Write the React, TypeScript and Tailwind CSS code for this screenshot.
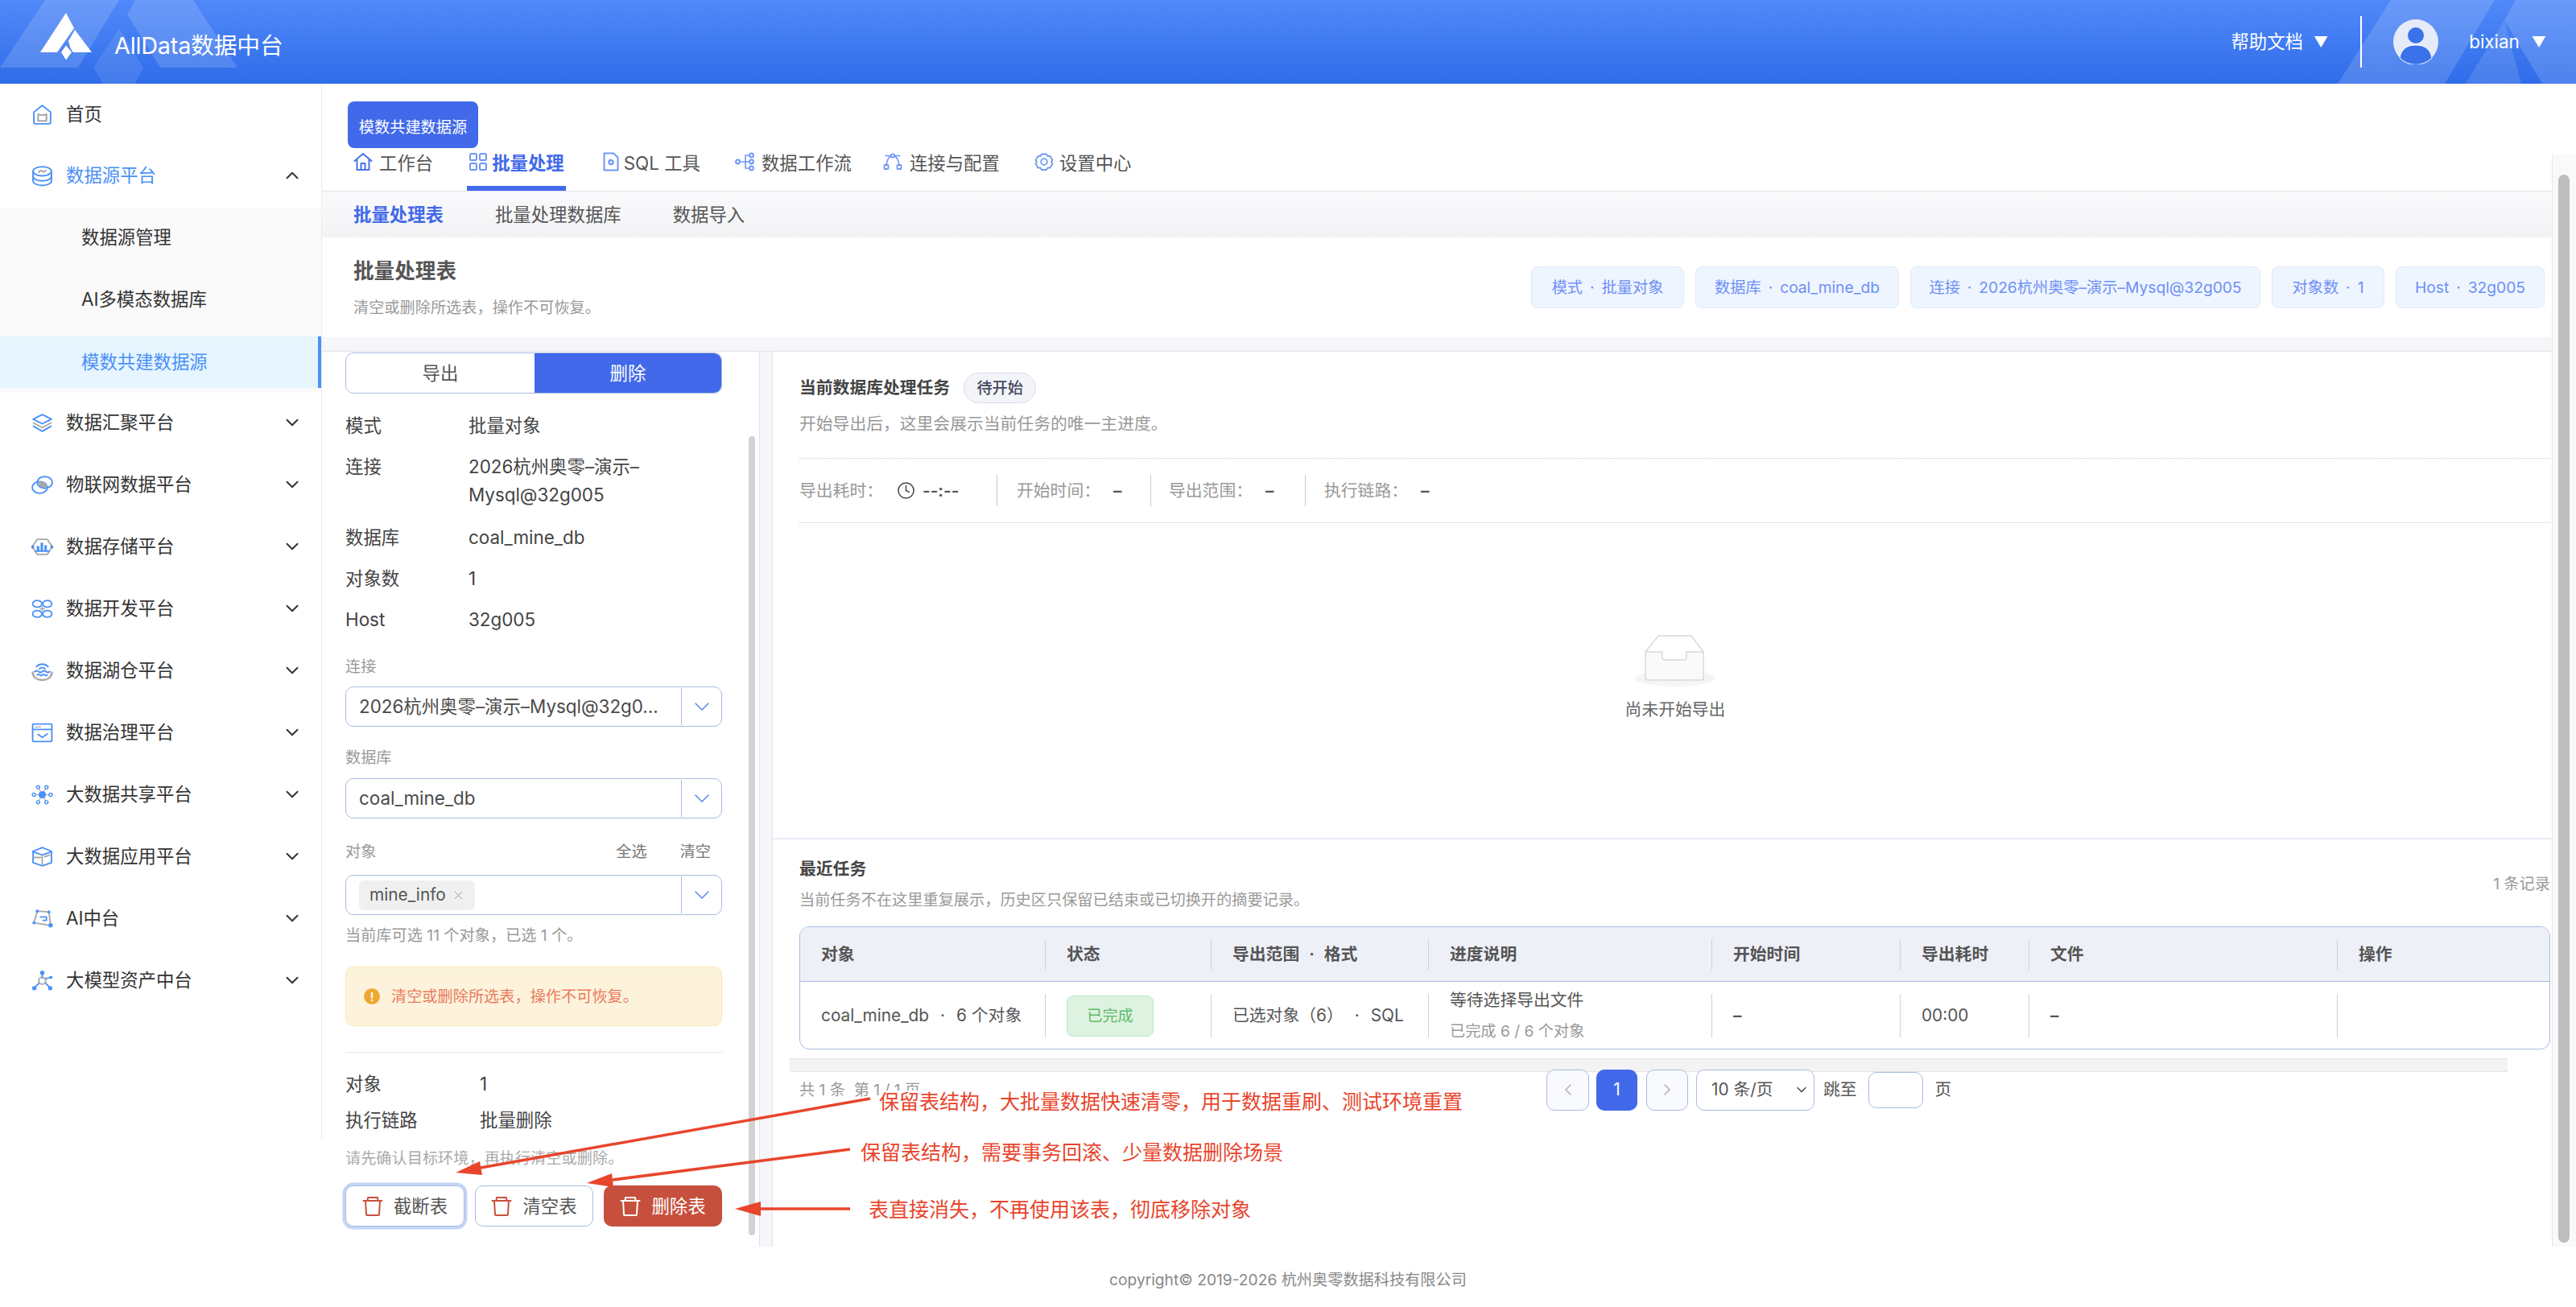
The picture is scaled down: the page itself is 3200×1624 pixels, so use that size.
import React from "react";
import { ChevronDown, ChevronUp, ChevronLeft, ChevronRight, Clock, X } from "lucide-react";

const B = "#4a90f7";
const G = "#a8a8a8";
const C = "\uFF0C";
const CL = "\uFF1A";
const LP = "\uFF08";
const RP = "\uFF09";

function Ico({ children }: { children: React.ReactNode }) {
  return (
    <svg viewBox="0 0 26 26" width="27" height="27" fill="none" stroke={B} strokeWidth="1.8" strokeLinecap="round" strokeLinejoin="round" className="shrink-0">
      {children}
    </svg>
  );
}

const sideIcons: Record<string, React.ReactNode> = {
  home: (
    <>
      <path d="M3 10 L13 2 L23 10 V22 a2 2 0 0 1-2 2 H5 a2 2 0 0 1-2-2 Z" />
      <path d="M8 12.5 q5 2 10 0 V20.5 H8 Z" stroke={G} strokeWidth="2" />
    </>
  ),
  db: (
    <>
      <ellipse cx="13" cy="7.5" rx="11" ry="5.5" />
      <path d="M9 8.5 q2 -3 4 -1 t4 -1" stroke={G} strokeWidth="2" />
      <path d="M2 7.5 V19 c0 3 5 5.5 11 5.5 s11 -2.5 11 -5.5 V7.5" />
      <path d="M2 13.5 c0 3 5 5.5 11 5.5 s11 -2.5 11 -5.5" />
    </>
  ),
  layers: (
    <>
      <path d="M13 3 L24 8.5 L13 14 L2 8.5 Z" />
      <path d="M2.5 13 L13 18.5 L23.5 13" stroke={G} />
      <path d="M2.5 17 L13 23 L23.5 17" />
    </>
  ),
  iot: (
    <>
      <ellipse cx="16" cy="10" rx="9" ry="7" />
      <ellipse cx="10" cy="16" rx="9" ry="7" />
      <ellipse cx="13.5" cy="12.5" rx="5.5" ry="3.2" fill={G} stroke="none" transform="rotate(30 13.5 12.5)" />
    </>
  ),
  store: (
    <>
      <path d="M7 4 H19 L25 13 L19 22 H7 L1 13 Z" stroke={G} />
      <path d="M8 12 v6 M12.5 8 v10 M17 11 v7" strokeWidth="3" strokeLinecap="butt" />
      <path d="M5 18 H21" />
      <circle cx="1.5" cy="13" r="1" fill={B} />
      <circle cx="24.5" cy="13" r="1" fill={B} />
    </>
  ),
  dev: (
    <>
      <ellipse cx="7" cy="7" rx="5.5" ry="4" />
      <ellipse cx="19" cy="7" rx="5.5" ry="4" />
      <ellipse cx="7" cy="19" rx="5.5" ry="4" />
      <ellipse cx="19" cy="19" rx="5.5" ry="4" />
      <path d="M13 9 L14 12 L17 13 L14 14 L13 17 L12 14 L9 13 L12 12 Z" fill={G} stroke="none" />
    </>
  ),
  lake: (
    <>
      <path d="M6 8 a9 8 0 0 1 14 0 M9.5 10.5 a5 4 0 0 1 7 0" />
      <path d="M4 14 q2.2 -2 4.5 0 t4.5 0 t4.5 0 t4.5 0" />
      <path d="M7 18 q1.5 -1.5 3 0 t3 0 t3 0 t3 0" />
      <path d="M1.5 15 C2 21 7 24 13 24 s11 -3 11.5 -9" stroke={G} strokeWidth="2.4" />
    </>
  ),
  gov: (
    <>
      <rect x="1.5" y="2.5" width="23" height="21" rx="1" />
      <path d="M1.5 9 H24.5" />
      <path d="M5 6 h6" stroke={G} strokeDasharray="1.4 1.4" strokeWidth="1.4" />
      <path d="M8 15 l5 3.5 l6 -4" />
    </>
  ),
  share: (
    <>
      <path d="M13 13 L3 13 M13 13 L23 13 M13 13 L8 4 M13 13 L18 4 M13 13 L8 22 M13 13 L18 22" stroke={G} strokeWidth="1" />
      <circle cx="13" cy="13" r="4.4" fill={B} stroke="none" />
      <circle cx="3" cy="13" r="1.9" fill="#fff" strokeWidth="1.4" />
      <circle cx="23" cy="13" r="1.9" fill="#fff" strokeWidth="1.4" />
      <circle cx="8" cy="4" r="1.9" fill="#fff" strokeWidth="1.4" />
      <circle cx="18" cy="4" r="1.9" fill="#fff" strokeWidth="1.4" />
      <circle cx="8" cy="22" r="1.9" fill="#fff" strokeWidth="1.4" />
      <circle cx="18" cy="22" r="1.9" fill="#fff" strokeWidth="1.4" />
    </>
  ),
  app: (
    <>
      <path d="M13 2 L24 6.5 V20 L13 24 L2 20 V6.5 Z" />
      <path d="M2 7 L13 11 L24 7" />
      <path d="M13 11 V24 M3 14 H11 M16 13 L22 11" stroke={G} />
    </>
  ),
  ai: (
    <>
      <path d="M7 4 L21 5 L23 21 L3 18 Z" stroke={G} />
      <path d="M11 11 H18 V15 H14" />
      <circle cx="7" cy="4" r="1.8" fill={B} stroke="none" />
      <circle cx="21" cy="5" r="1.8" fill={B} stroke="none" />
      <circle cx="23" cy="21" r="2.6" fill={B} stroke="none" />
      <circle cx="3" cy="18" r="1.8" fill={B} stroke="none" />
    </>
  ),
  model: (
    <>
      <path d="M13 6 V10 M9.5 15.5 L4 21 M16.5 15.5 L22 21 M16 11 L23 9" />
      <circle cx="13" cy="13" r="4.2" stroke={G} />
      <circle cx="13" cy="3.5" r="2.6" fill={B} stroke="none" />
      <circle cx="3.5" cy="22" r="2.6" fill={B} stroke="none" />
      <circle cx="22.5" cy="22" r="2.6" fill={B} stroke="none" />
      <circle cx="23.5" cy="9" r="1.8" fill={B} stroke="none" />
    </>
  ),
};

const menus = [
  ["layers", "数据汇聚平台"],
  ["iot", "物联网数据平台"],
  ["store", "数据存储平台"],
  ["dev", "数据开发平台"],
  ["lake", "数据湖仓平台"],
  ["gov", "数据治理平台"],
  ["share", "大数据共享平台"],
  ["app", "大数据应用平台"],
  ["ai", "AI中台"],
  ["model", "大模型资产中台"],
];

function TabIcon({ kind, active }: { kind: string; active?: boolean }) {
  const c = active ? "#6f97f5" : kind === "home" ? "#4a74ee" : "#6f97f5";
  return (
    <svg viewBox="0 0 24 24" width="24" height="24" fill="none" stroke={c} strokeWidth="2" strokeLinecap="round" strokeLinejoin="round" className="shrink-0">
      {kind === "home" && <path d="M1.5 11 L12 2 L22.5 11 M4.5 9 V22 H19.5 V9 M9.5 22 V14 H14.5 V22" />}
      {kind === "grid" && (
        <>
          <rect x="2" y="2" width="8" height="8" rx="1.5" />
          <rect x="14" y="2" width="8" height="8" rx="1.5" />
          <rect x="2" y="14" width="8" height="8" rx="1.5" />
          <rect x="14" y="14" width="8" height="8" rx="1.5" />
        </>
      )}
      {kind === "file" && (
        <>
          <path d="M3.5 1.5 H15 L20.5 6.5 V22.5 H3.5 Z" />
          <circle cx="12" cy="12.5" r="2.6" strokeWidth="2.4" strokeDasharray="2 0.8" />
        </>
      )}
      {kind === "flow" && (
        <>
          <circle cx="3.5" cy="12" r="2.4" />
          <circle cx="20.5" cy="4" r="2.4" />
          <circle cx="20.5" cy="12" r="2.4" />
          <circle cx="20.5" cy="20" r="2.4" />
          <path d="M6 12 H18 M13 4 H18 M13 20 H18 M13 4 V20" strokeWidth="1.6" />
        </>
      )}
      {kind === "link" && (
        <>
          <rect x="1.5" y="16" width="5" height="5" rx="0.8" strokeWidth="1.8" />
          <rect x="17.5" y="16" width="5" height="5" rx="0.8" strokeWidth="1.8" />
          <circle cx="12" cy="4.5" r="2.2" strokeWidth="1.8" />
          <path d="M4 16 C5 10 7 6 10 4.5 M14 4.5 C17 6 19 10 20 16 M10 4.5 H3 M14 4.5 H21" strokeWidth="1.6" />
        </>
      )}
      {kind === "gear" && (
        <>
          <path d="M9 2.5 H15 L16.5 5 L19.5 5 L22.5 10 L21 12 L22.5 14.5 L19.5 19.5 L16.5 19.5 L15 22 H9 L7.5 19.5 L4.5 19.5 L1.5 14.5 L3 12 L1.5 10 L4.5 5 L7.5 5 Z" strokeWidth="1.8" />
          <circle cx="12" cy="12" r="3.8" strokeWidth="1.8" />
        </>
      )}
    </svg>
  );
}

function Trash({ color }: { color: string }) {
  return (
    <svg viewBox="0 0 26 26" width="26" height="26" fill="none" stroke={color} strokeWidth="2" strokeLinecap="round" strokeLinejoin="round" className="shrink-0">
      <path d="M1.5 6 H24.5" />
      <path d="M6.5 6 L7 2 H19 L19.5 6" />
      <path d="M4 6 L5 23 a1 1 0 0 0 1 1 H20 a1 1 0 0 0 1-1 L22 6" />
    </svg>
  );
}

function Select({ children }: { children: React.ReactNode }) {
  return (
    <div className="flex h-[50px] w-[468px] items-stretch rounded-[10px] border-[1.5px] border-[#a9bbdf] bg-white">
      <div className="flex min-w-0 flex-1 items-center pl-[16px] text-[22.4px] text-[#4a4a4a]">{children}</div>
      <div className="my-[1px] flex w-[50px] items-center justify-center border-l-[1.5px] border-[#a9bbdf]">
        <ChevronDown size={32} strokeWidth={1.1} color="#5b84ea" />
      </div>
    </div>
  );
}

function Kv({ k, children, w = "w-[153px]" }: { k: string; children: React.ReactNode; w?: string }) {
  return (
    <div className="flex text-[22.4px] leading-[35px] text-[#444]">
      <div className={w}>{k}</div>
      <div>{children}</div>
    </div>
  );
}

function Stat({ label, value, cls }: { label: string; value: string; cls: string }) {
  return (
    <div className={cls}>
      <span className="text-[#999]">{label}{CL}</span>
      <span className="ml-[16px] font-semibold text-[#555]">{value}</span>
    </div>
  );
}

function TagDot() {
  return <span className="mx-[9px]">·</span>;
}

const GRID = "grid grid-cols-[305px_206px_270px_352px_234px_160px_383px_1fr] items-center";
const TAG = "flex h-[52px] items-center justify-center rounded-[8px] border border-[#dde9fb] bg-[#eef5ff]";
const TH = "flex h-[38px] items-center border-r-[1.5px] border-[#cfcfd6] pl-[26px]";
const TD = "flex h-[54px] items-center whitespace-nowrap border-r-[1.5px] border-[#cfcfd6] pl-[26px]";
const NOTE = "absolute bg-white text-[25px] leading-[28px] text-[#e8452c]";

export default function App() {
  return (
    <div className="relative flex h-[1624px] w-[3200px] flex-col overflow-hidden bg-white font-[family-name:Inter,'Noto_Sans_CJK_SC',sans-serif]">
      {/* header */}
      <header className="relative flex h-[104px] shrink-0 items-center bg-gradient-to-b from-[#5089f9] to-[#2f6ce9] text-white">
        <svg className="absolute inset-0" width="3200" height="104" viewBox="0 0 3200 104">
          <g fill="#fff" fillOpacity="0.15">
            <polygon points="56,0 148,0 97,84 0,84" />
            <polygon points="168,0 240,0 295,84 199,84 158,18" />
            <polygon points="148,35 178,84 168,104 128,104 116,84" fillOpacity="0.1" />
            <polygon points="2970,0 3099,0 3037,104 2904,104" />
            <polygon points="3125,0 3200,0 3200,104 3158,104 3111,25" />
            <polygon points="3111,25 3132,104 3063,104" fillOpacity="0.12" />
          </g>
        </svg>
        <div className="relative ml-[50px] flex items-center">
          <svg width="64" height="60" viewBox="0 0 64 60" className="mb-[12px]">
            <polygon fill="#fff" points="32,0 42,19 21,49 0,49" />
            <polygon fill="#fff" points="43,21 64,49 39,49 35,35" />
            <polygon fill="#fff" points="32,39 40,49 32,60 25,49" stroke="#4a82f2" strokeWidth="1.5" />
          </svg>
          <span className="ml-[28px] mt-[10px] text-[28.8px] leading-[40px] tracking-[-0.2px]">AllData数据中台</span>
        </div>
        <div className="relative ml-auto flex items-center text-[22.4px]">
          <span>帮助文档</span>
          <span className="ml-[13px] text-[18px]">▼</span>
          <div className="ml-[40px] h-[64px] w-[2px] bg-white" />
          <svg width="56" height="56" viewBox="0 0 56 56" className="ml-[39px]">
            <circle cx="28" cy="28" r="28" fill="#e6ebf8" />
            <circle cx="28" cy="20" r="10" fill="#3a72ea" />
            <path d="M8 48 C10 36 18 32 28 32 S46 36 48 48 A28 28 0 0 1 8 48 Z" fill="#3a72ea" stroke="#fff" strokeWidth="1" />
          </svg>
          <span className="ml-[38px]">bixian</span>
          <span className="ml-[15px] mr-[37px] text-[18px]">▼</span>
        </div>
      </header>

      <div className="flex h-[1445px] shrink-0">
        {/* sidebar */}
        <aside className="h-[1312px] w-[400px] shrink-0 self-start border-r-[1.5px] border-[#ececf0] pt-[6px] text-[22.4px] text-[#333]">
          <div className="flex h-[64px] items-center pl-[39px]">
            <Ico>{sideIcons.home}</Ico>
            <span className="ml-[16px]">首页</span>
          </div>
          <div className="mt-[12px] flex h-[64px] items-center pl-[39px] pr-[23px] text-[#4a90f7]">
            <Ico>{sideIcons.db}</Ico>
            <span className="ml-[16px]">数据源平台</span>
            <ChevronUp size={26} strokeWidth={1.8} color="#333" className="ml-auto" />
          </div>
          <div className="mt-[8px] h-[230px] bg-[#fafafa] pt-[5px]">
            <div className="flex h-[64px] items-center pl-[101px]">数据源管理</div>
            <div className="mt-[13px] flex h-[64px] items-center pl-[101px]">AI多模态数据库</div>
            <div className="mt-[14px] flex h-[64px] items-center border-r-[4px] border-[#4a90f7] bg-[#e6f5fe] pl-[101px] text-[#4a90f7]">模数共建数据源</div>
          </div>
          <div className="mt-[5px] flex flex-col gap-[13px]">
            {menus.map(([ic, t]) => (
              <div key={t} className="flex h-[64px] items-center pl-[39px] pr-[23px]">
                <Ico>{sideIcons[ic]}</Ico>
                <span className="ml-[16px]">{t}</span>
                <ChevronDown size={26} strokeWidth={1.8} color="#333" className="ml-auto" />
              </div>
            ))}
          </div>
        </aside>

        {/* main */}
        <main className="flex min-w-0 flex-1">
          <div className="flex w-[2770px] shrink-0 flex-col">
            <div className="pl-[32px] pt-[22px]">
              <div className="flex h-[58px] w-[162px] items-center justify-center rounded-[8px] bg-[#4169e9] pt-[6px] text-[19.2px] text-white">模数共建数据源</div>
            </div>
            <nav className="flex h-[54px] border-b-[1.5px] border-[#e3e3ee] pl-[39px] text-[22.4px] text-[#555]">
              <div className="flex h-[53px] items-start gap-[8px] pt-[5px] leading-[28px]"><TabIcon kind="home" />工作台</div>
              <div className="ml-[42px] flex h-[53px] items-start gap-[5px] border-b-[6px] border-[#4169e9] px-[2px] pt-[5px] font-semibold leading-[28px] text-[#4169e9]"><TabIcon kind="grid" active />批量处理</div>
              <div className="ml-[44px] flex h-[53px] items-start gap-[4px] pt-[5px] leading-[28px]"><TabIcon kind="file" />SQL 工具</div>
              <div className="ml-[43px] flex h-[53px] items-start gap-[9px] pt-[5px] leading-[28px]"><TabIcon kind="flow" />数据工作流</div>
              <div className="ml-[39px] flex h-[53px] items-start gap-[9px] pt-[5px] leading-[28px]"><TabIcon kind="link" />连接与配置</div>
              <div className="ml-[43px] flex h-[53px] items-start gap-[7px] pt-[5px] leading-[28px]"><TabIcon kind="gear" />设置中心</div>
            </nav>
            <div className="flex h-[57px] items-center gap-[64px] bg-gradient-to-b from-[#fafafc] to-[#f2f3f5] pl-[39px] text-[22.4px] text-[#555]">
              <span className="font-semibold text-[#4169e9]">批量处理表</span>
              <span>批量处理数据库</span>
              <span>数据导入</span>
            </div>
            <div className="flex h-[124px] items-center justify-between pl-[39px] pr-[9px]">
              <div>
                <div className="text-[25.6px] font-semibold leading-[36px] text-[#555]">批量处理表</div>
                <div className="mt-[13px] text-[19.2px] leading-[28px] text-[#999]">{`清空或删除所选表${C}操作不可恢复。`}</div>
              </div>
              <div className="flex gap-[14px] text-[19.2px] text-[#6f8ff5]">
                <div className={`${TAG} w-[190px]`}>模式<TagDot />批量对象</div>
                <div className={`${TAG} w-[253px]`}>数据库<TagDot />coal_mine_db</div>
                <div className={`${TAG} w-[435px]`}>连接<TagDot />2026杭州奥零–演示–Mysql@32g005</div>
                <div className={`${TAG} w-[140px]`}>对象数<TagDot />1</div>
                <div className={`${TAG} w-[185px]`}>Host<TagDot />32g005</div>
              </div>
            </div>
            <div className="flex h-[130px] flex-1 flex-col bg-[#f4f6fa] pt-[17px]">
              <div className="flex flex-1 border-t-[1.5px] border-[#e3e3e8]">
                {/* left panel */}
                <section className="relative w-[544px] shrink-0 border-r-[1.5px] border-[#e3e3e8] bg-white pl-[29px] pt-[1px]">
                  <div className="flex h-[51px] w-[468px] overflow-hidden rounded-[10px] border-[1.5px] border-[#a9bbdf] text-[22.4px]">
                    <div className="flex w-[234px] items-center justify-center text-[#555]">导出</div>
                    <div className="flex flex-1 items-center justify-center bg-[#4169e9] text-white">删除</div>
                  </div>
                  <div className="mt-[22px] flex flex-col gap-[16px]">
                    <Kv k="模式">批量对象</Kv>
                    <div className="pb-[2px]">
                      <Kv k="连接">2026杭州奥零–演示–<br />Mysql@32g005</Kv>
                    </div>
                    <Kv k="数据库">coal_mine_db</Kv>
                    <Kv k="对象数">1</Kv>
                    <Kv k="Host">32g005</Kv>
                  </div>
                  <div className="mb-[10px] mt-[26px] text-[19.2px] leading-[30px] text-[#999]">连接</div>
                  <Select><span className="truncate">2026杭州奥零–演示–Mysql@32g0...</span></Select>
                  <div className="mb-[11px] mt-[23px] text-[19.2px] leading-[30px] text-[#999]">数据库</div>
                  <Select>coal_mine_db</Select>
                  <div className="mb-[14px] mt-[26px] flex w-[468px] text-[19.2px] leading-[30px] text-[#999]">
                    <span>对象</span>
                    <span className="ml-auto text-[#777]">全选</span>
                    <span className="ml-[41px] mr-[14px] text-[#777]">清空</span>
                  </div>
                  <Select>
                    <span className="flex h-[37px] w-[144px] items-center rounded-[6px] bg-[#f0f0f0] pl-[13px] text-[20.8px] text-[#555]">
                      mine_info
                      <X size={17} strokeWidth={1.4} color="#999" className="ml-[7px]" />
                    </span>
                  </Select>
                  <div className="mt-[11px] text-[19.2px] leading-[28px] text-[#999]">{`当前库可选 11 个对象${C}已选 1 个。`}</div>
                  <div className="mt-[25px] flex h-[74px] w-[468px] items-center rounded-[10px] border-[1.5px] border-[#fbe7b6] bg-[#fdf3dc] pl-[22px] text-[19.2px] text-[#ea7a5c]">
                    <span className="flex h-[20px] w-[20px] items-center justify-center rounded-full bg-[#efa82f] text-[14px] font-bold text-white">!</span>
                    <span className="ml-[14px]">{`清空或删除所选表${C}操作不可恢复。`}</span>
                  </div>
                  <div className="mt-[32px] w-[468px] border-t-[1.5px] border-[#e8e8ec]" />
                  <div className="mt-[21px] flex flex-col gap-[10px]">
                    <Kv k="对象" w="w-[167px]">1</Kv>
                    <Kv k="执行链路" w="w-[167px]">批量删除</Kv>
                  </div>
                  <div className="mt-[16px] text-[19.2px] leading-[28px] text-[#aaa]">{`请先确认目标环境${C}再执行清空或删除。`}</div>
                  <div className="mt-[20px] flex w-[468px] gap-[13px] text-[22.4px]">
                    <div className="flex h-[51px] w-[148px] items-center justify-center gap-[13px] rounded-[10px] border-[1.5px] border-[#a9bbdf] text-[#555] shadow-[0_0_0_3.5px_#c4d4f6]"><Trash color="#c9503d" />截断表</div>
                    <div className="flex h-[51px] w-[147px] items-center justify-center gap-[13px] rounded-[10px] border-[1.5px] border-[#a9bbdf] text-[#555]"><Trash color="#c9503d" />清空表</div>
                    <div className="flex h-[51px] w-[147px] items-center justify-center gap-[13px] rounded-[10px] bg-[#c6503d] text-white"><Trash color="#fff" />删除表</div>
                  </div>
                  <div className="absolute left-[530px] top-[105px] h-[993px] w-[8px] rounded-full bg-[#d2d2d2]" />
                </section>

                <div className="w-[15px] shrink-0" />

                {/* right panel */}
                <section className="flex min-w-0 flex-1 flex-col border-l-[1.5px] border-[#e3e3e8] bg-white">
                  <div className="pl-[33px] pr-[2px] pt-[26px]">
                    <div className="flex h-[38px] items-center">
                      <span className="text-[20.8px] font-semibold text-[#444]">当前数据库处理任务</span>
                      <span className="ml-[17px] flex h-[38px] w-[90px] items-center justify-center rounded-full border-[1.5px] border-[#d9dde5] bg-[#f2f4f7] text-[19.2px] font-medium text-[#444a5e]">待开始</span>
                    </div>
                    <div className="mt-[12px] text-[20.8px] leading-[28px] text-[#999]">{`开始导出后${C}这里会展示当前任务的唯一主进度。`}</div>
                    <div className="mt-[28px] flex h-[81px] items-center border-y-[1.5px] border-dotted border-[#c8c8c8] text-[20.8px]">
                      <div className="flex h-[39px] w-[246px] items-center border-r-[1.5px] border-[#c8c8c8]">
                        <span className="text-[#999]">导出耗时{CL}</span>
                        <Clock size={23} strokeWidth={1.6} color="#444" className="ml-[17px]" />
                        <span className="ml-[9px] font-semibold text-[#555]">--:--</span>
                      </div>
                      <Stat label="开始时间" value="–" cls="flex h-[39px] w-[191px] items-center border-r-[1.5px] border-[#c8c8c8] pl-[24px]" />
                      <Stat label="导出范围" value="–" cls="flex h-[39px] w-[192px] items-center border-r-[1.5px] border-[#c8c8c8] pl-[22px]" />
                      <Stat label="执行链路" value="–" cls="flex h-[39px] items-center pl-[23px]" />
                    </div>
                  </div>
                  <div className="flex h-[391px] flex-col items-center justify-center pb-[6px] pl-[32px]">
                    <svg width="100" height="64" viewBox="0 0 100 64">
                      <ellipse cx="50" cy="54" rx="50" ry="10" fill="#f5f5f5" />
                      <path d="M13 21 L29 1 H70 L85 21" fill="#fff" stroke="#d9d9d9" strokeWidth="1.5" />
                      <path d="M13 21 H34 V28 a3 3 0 0 0 3 3 H61 a3 3 0 0 0 3-3 V21 H85 V53 a3 3 0 0 1-3 3 H16 a3 3 0 0 1-3-3 Z" fill="#fafafa" stroke="#d9d9d9" strokeWidth="1.5" />
                    </svg>
                    <div className="mt-[15px] text-[20.8px] leading-[28px] text-[#666]">尚未开始导出</div>
                  </div>
                  <div className="border-t-[2px] border-[#e6ebf2] pl-[33px] pr-[2px] pt-[22px]">
                    <div className="flex items-center justify-between">
                      <div>
                        <div className="text-[20.8px] font-semibold leading-[30px] text-[#444]">最近任务</div>
                        <div className="mt-[9px] text-[19.2px] leading-[28px] text-[#999]">{`当前任务不在这里重复展示${C}历史区只保留已结束或已切换开的摘要记录。`}</div>
                      </div>
                      <span className="text-[19.2px] text-[#999]">1 条记录</span>
                    </div>
                    <div className="mt-[19px] h-[153px] overflow-hidden rounded-[12px] border-[1.5px] border-[#a9bbdf] text-[20.8px] text-[#555]">
                      <div className={`${GRID} h-[68px] border-b-[1.5px] border-[#a9bbdf] bg-[#eef0f8] font-semibold`}>
                        <div className={TH}>对象</div>
                        <div className={TH}>状态</div>
                        <div className={TH}>导出范围<span className="mx-[12px]">·</span>格式</div>
                        <div className={TH}>进度说明</div>
                        <div className={TH}>开始时间</div>
                        <div className={TH}>导出耗时</div>
                        <div className={TH}>文件</div>
                        <div className="flex h-[38px] items-center pl-[26px]">操作</div>
                      </div>
                      <div className={`${GRID} h-[84px]`}>
                        <div className={TD}>coal_mine_db<span className="mx-[14px]">·</span>6 个对象</div>
                        <div className={TD}>
                          <span className="flex h-[51px] w-[108px] items-center justify-center rounded-[8px] border-[1.5px] border-[#bfe9c6] bg-[#def2e1] text-[19.2px] text-[#5dbb6a]">已完成</span>
                        </div>
                        <div className={TD}>{`已选对象${LP}6${RP}`}<span className="mx-[14px]">·</span>SQL</div>
                        <div className="flex h-[54px] flex-col justify-center gap-[10px] border-r-[1.5px] border-[#cfcfd6] pl-[26px] leading-[28px]">
                          <span>等待选择导出文件</span>
                          <span className="text-[19.2px] text-[#999]">已完成 6 / 6 个对象</span>
                        </div>
                        <div className={`${TD} font-semibold`}>–</div>
                        <div className={TD}>00:00</div>
                        <div className={`${TD} font-semibold`}>–</div>
                        <div className="h-[54px]" />
                      </div>
                    </div>
                    <div className="ml-[-12px] mt-[11px] h-[17px] w-[2134px] border-y-[1.5px] border-[#e3e3e3] bg-[#f3f3f3]" />
                    <div className="relative mt-[-4px] flex h-[52px] items-center text-[20.8px] text-[#555]">
                      <span className="w-[928px] shrink-0 text-[19.2px] text-[#999]">共 1 条&nbsp;&nbsp;第 1 / 1 页</span>
                      <span className="flex h-[51px] w-[53px] items-center justify-center rounded-[10px] border-[1.5px] border-[#a9bbdf] bg-[#f9fafd]"><ChevronLeft size={24} strokeWidth={1.4} color="#aaa" /></span>
                      <span className="ml-[9px] flex h-[51px] w-[51px] items-center justify-center rounded-[10px] bg-[#4169e9] text-white">1</span>
                      <span className="ml-[11px] flex h-[51px] w-[52px] items-center justify-center rounded-[10px] border-[1.5px] border-[#a9bbdf] bg-[#f9fafd]"><ChevronRight size={24} strokeWidth={1.4} color="#aaa" /></span>
                      <span className="ml-[10px] flex h-[51px] w-[147px] items-center justify-between rounded-[10px] border-[1.5px] border-[#a9bbdf] bg-white pl-[18px] pr-[5px]">10 条/页<ChevronDown size={20} strokeWidth={1.6} color="#444" /></span>
                      <span className="ml-[11px]">跳至</span>
                      <span className="ml-[14px] h-[45px] w-[68px] rounded-[10px] border-[1.5px] border-[#a9bbdf] bg-white" />
                      <span className="ml-[15px]">页</span>
                    </div>
                  </div>
                </section>
              </div>
            </div>
          </div>

          {/* page scrollbar */}
          <div className="flex-1 pt-[88px]">
            <div className="h-[1357px] border-l-[1.5px] border-[#e8e8e8] bg-[#f9f9f9] pl-[7px] pt-[25px]">
              <div className="h-[1327px] w-[14px] rounded-full bg-[#bdbdbd]" />
            </div>
          </div>
        </main>
      </div>

      <footer className="flex flex-1 items-center justify-center pt-[8px] text-[19.2px] text-[#888]">copyright© 2019-2026 杭州奥零数据科技有限公司</footer>

      {/* annotations drawn over the screenshot */}
      <svg className="absolute inset-0" width="3200" height="1624" viewBox="0 0 3200 1624" fill="none">
        <g stroke="#e8452c" strokeWidth="3.5">
          <line x1="597" y1="1451" x2="1081" y2="1365" />
          <line x1="761" y1="1466" x2="1056" y2="1428" />
          <line x1="945" y1="1502" x2="1056" y2="1502" />
        </g>
        <g fill="#e8452c">
          <polygon points="566,1457 599,1460 596,1443" />
          <polygon points="729,1470 762,1475 760,1458" />
          <polygon points="913,1502 945,1493 945,1511" />
        </g>
      </svg>
      <div className={`${NOTE} left-[1092px] top-[1355px]`}>{`保留表结构${C}大批量数据快速清零${C}用于数据重刷、测试环境重置`}</div>
      <div className={`${NOTE} left-[1069px] top-[1418px]`}>{`保留表结构${C}需要事务回滚、少量数据删除场景`}</div>
      <div className={`${NOTE} left-[1079px] top-[1489px]`}>{`表直接消失${C}不再使用该表${C}彻底移除对象`}</div>
    </div>
  );
}
